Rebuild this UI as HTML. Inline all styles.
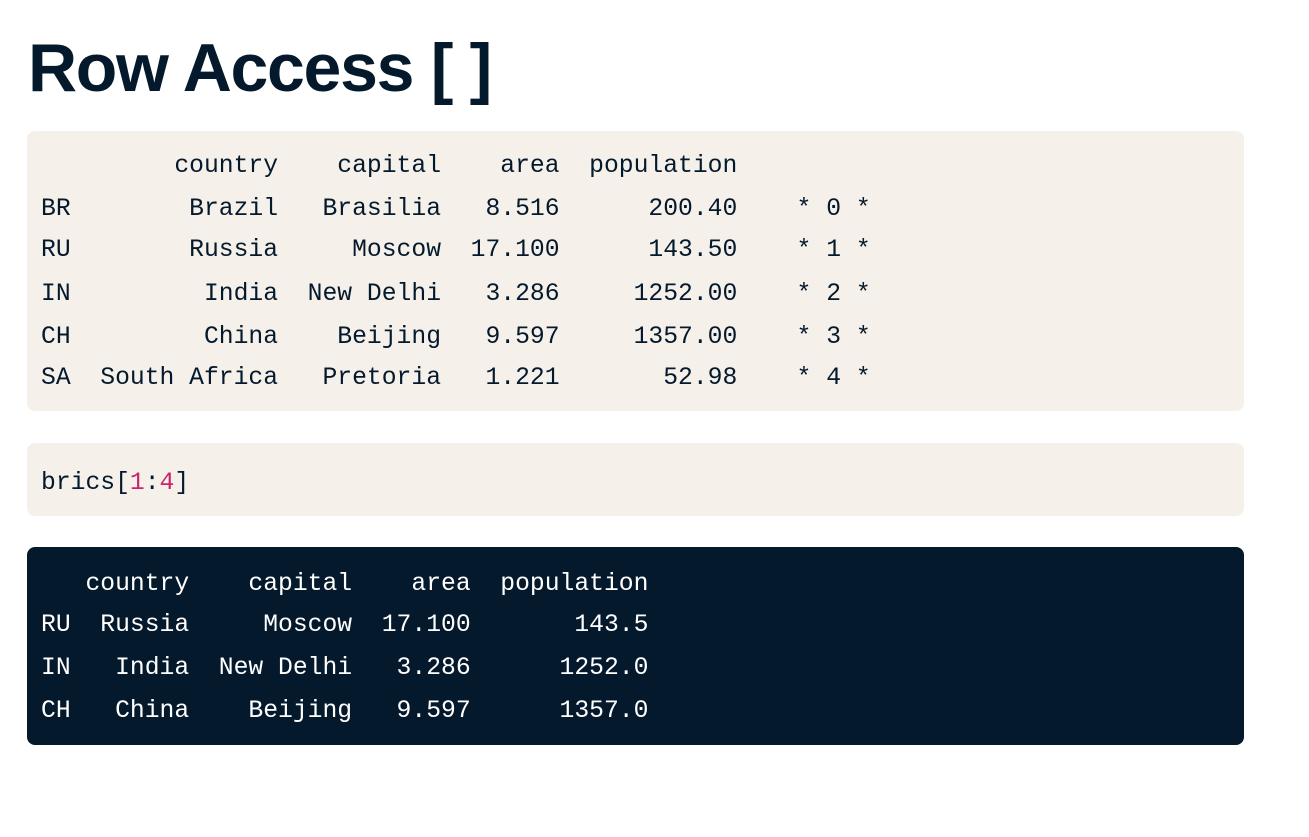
<!DOCTYPE html>
<html><head><meta charset="utf-8"><style>
body{margin:0;width:1309px;height:837px;background:#fff;position:relative;overflow:hidden;color:#05192d}
h1{position:absolute;left:28px;top:23px;margin:0;font:bold 68px/90px "Liberation Sans",sans-serif;color:#05192d;letter-spacing:-1.3px}
.box{position:absolute;left:27px;width:1217px;border-radius:8px}
.b{background:#f5f1ea}
.d{background:#05192d}
.l{position:absolute;left:41px;font:24.7px/30px "Liberation Mono",monospace;white-space:pre;color:#05192d}
.w{color:#fff}
.p{color:#c8266a}
</style></head><body>
<h1>Row Access [ ]</h1>
<div class="box b" style="top:131px;height:280px"></div>
<div class="l" style="top:151px">         country    capital    area  population</div>
<div class="l" style="top:194px">BR        Brazil   Brasilia   8.516      200.40    * 0 *</div>
<div class="l" style="top:235px">RU        Russia     Moscow  17.100      143.50    * 1 *</div>
<div class="l" style="top:279px">IN         India  New Delhi   3.286     1252.00    * 2 *</div>
<div class="l" style="top:322px">CH         China    Beijing   9.597     1357.00    * 3 *</div>
<div class="l" style="top:363px">SA  South Africa   Pretoria   1.221       52.98    * 4 *</div>
<div class="box b" style="top:443px;height:73px"></div>
<div class="l" style="top:468px">brics[<span class="p">1</span>:<span class="p">4</span>]</div>
<div class="box d" style="top:547px;height:198px"></div>
<div class="l w" style="top:569px">   country    capital    area  population</div>
<div class="l w" style="top:610px">RU  Russia     Moscow  17.100       143.5</div>
<div class="l w" style="top:653px">IN   India  New Delhi   3.286      1252.0</div>
<div class="l w" style="top:696px">CH   China    Beijing   9.597      1357.0</div>
</body></html>
